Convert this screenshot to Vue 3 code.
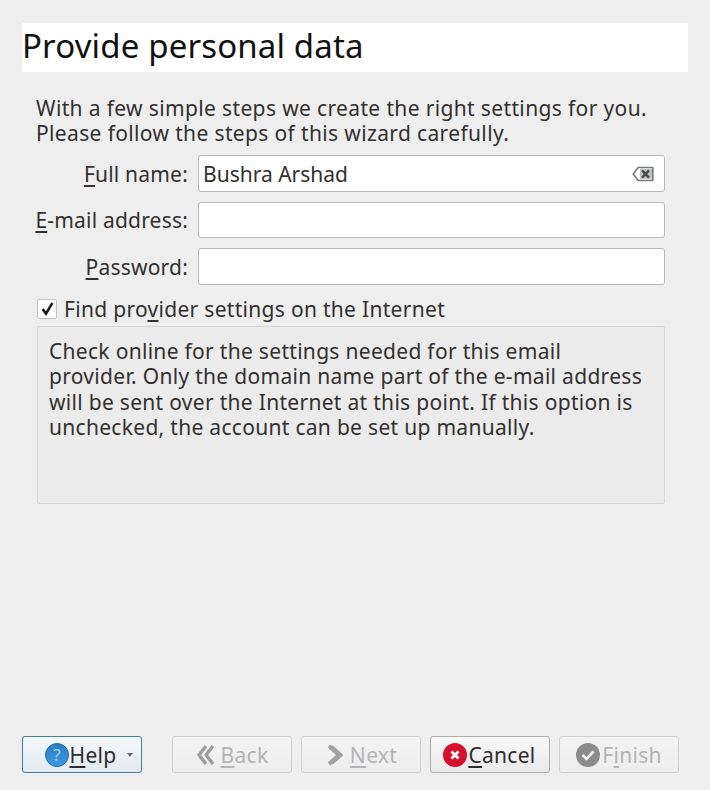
<template>
  <div class="wizard">
    <div class="title-bar">Provide personal data</div>

    <div class="content">
      <p class="intro">
        With a few simple steps we create the right settings for you.<br>
        Please follow the steps of this wizard carefully.
      </p>

      <div class="form">
        <label class="form-label"><u>F</u>ull name:</label>
        <div class="input">
          <span>Bushra Arshad</span>
          <svg class="clear-icon" width="22" height="16" viewBox="0 0 22 16">
            <path d="M1.2 8 L6.2 1.5 H20.8 V14.5 H6.2 Z" fill="none" stroke="#77797a" stroke-width="1.6" stroke-linejoin="round" />
            <rect x="8" y="3" width="12" height="10" fill="#c3c5c5" />
            <path d="M10 4.4 L17 11.6 M17 4.4 L10 11.6" stroke="#47494a" stroke-width="2.4" />
          </svg>
        </div>

        <label class="form-label"><u>E</u>-mail address:</label>
        <div class="input"></div>

        <label class="form-label"><u>P</u>assword:</label>
        <div class="input"></div>
      </div>

      <div class="check-row">
        <span class="checkbox">
          <svg width="15" height="15" viewBox="0 0 15 15">
            <path d="M2.6 8 L6 12.6 L12.4 1.8" fill="none" stroke="#1c1c1c" stroke-width="2.6" />
          </svg>
        </span>
        <span>Find pro<u>v</u>ider settings on the Internet</span>
      </div>

      <div class="info-box">
        Check online for the settings needed for this email<br>
        provider. Only the domain name part of the e-mail address<br>
        will be sent over the Internet at this point. If this option is<br>
        unchecked, the account can be set up manually.
      </div>
    </div>

    <div class="buttons">
      <button class="btn btn-help">
        <svg width="24" height="24" viewBox="0 0 24 24">
          <defs>
            <linearGradient id="helpFill" x1="0" y1="0" x2="0" y2="1">
              <stop offset="0" stop-color="#2a7cc6" />
              <stop offset="1" stop-color="#3f9ae0" />
            </linearGradient>
          </defs>
          <circle cx="12" cy="12" r="11.5" fill="url(#helpFill)" stroke="#1f6eb2" stroke-width="1" />
          <text x="12" y="18" text-anchor="middle" class="help-mark">?</text>
        </svg>
        <span><u>H</u>elp</span>
        <span class="caret"></span>
      </button>

      <div class="nav-buttons">
        <button class="btn disabled">
          <svg width="20" height="22" viewBox="0 0 20 22">
            <path d="M10 2 L3 11 L10 20 M17 2 L10 11 L17 20" fill="none" stroke="#9d9d9d" stroke-width="3.4" stroke-linejoin="round" />
          </svg>
          <span><u>B</u>ack</span>
        </button>
        <button class="btn disabled">
          <svg width="20" height="22" viewBox="0 0 20 22">
            <path d="M4 2 L14 11 L4 20" fill="none" stroke="#a2a2a2" stroke-width="4" stroke-linejoin="round" />
            <path d="M7 2 L17 11 L7 20" fill="none" stroke="#a2a2a2" stroke-width="2" stroke-linejoin="round" />
          </svg>
          <span><u>N</u>ext</span>
        </button>
        <button class="btn btn-cancel">
          <svg width="24" height="24" viewBox="0 0 24 24">
            <circle cx="12" cy="12" r="12" fill="#d5112f" />
            <path d="M8.5 8.5 L15.5 15.5 M15.5 8.5 L8.5 15.5" stroke="#fff" stroke-width="2.8" />
          </svg>
          <span><u>C</u>ancel</span>
        </button>
        <button class="btn disabled btn-finish">
          <svg width="24" height="24" viewBox="0 0 24 24">
            <circle cx="12" cy="12" r="12" fill="#8c8c8c" />
            <path d="M6.5 12 L10.5 16 L17.5 8.5" fill="none" stroke="#f2f2f2" stroke-width="2.6" />
          </svg>
          <span>F<u>i</u>nish</span>
        </button>
      </div>
    </div>
  </div>
</template>

<script setup>
</script>

<style>
html,
body {
  background: #eeeeee;
}
</style>

<style scoped>
.wizard {
  box-sizing: border-box;
  width: 710px;
  height: 790px;
  padding: 23px 22px 17px;
  display: flex;
  flex-direction: column;
  background: #eeeeee;
  color: #33302e;
  font-family: "Noto Sans", "Open Sans", sans-serif;
  font-size: 21px;
}

u {
  text-underline-offset: 3px;
  text-decoration-thickness: 2px;
}

.title-bar {
  height: 49px;
  width: 666px;
  background: #fff;
  color: #111;
  font-size: 33px;
  letter-spacing: 0.15px;
  line-height: 45px;
}

.content {
  flex: 1;
  padding: 24px 23px 0 14px;
}

.intro {
  margin: 0;
  line-height: 25px;
  letter-spacing: 0.36px;
}

.form {
  margin-top: 9px;
  display: grid;
  grid-template-columns: 152px 467px;
  column-gap: 10px;
  row-gap: 10px;
  align-items: center;
}

.form-label {
  justify-self: end;
  white-space: nowrap;
  padding-top: 1px;
  letter-spacing: 0.2px;
}

.input {
  box-sizing: border-box;
  height: 36.5px;
  padding: 1px 4px 0;
  display: flex;
  align-items: center;
  justify-content: space-between;
  background: #fff;
  border: 1px solid #b8b8b8;
  border-radius: 3px;
}

.clear-icon {
  margin-right: 6px;
}

.check-row {
  margin-top: 13px;
  height: 22px;
  padding-left: 1px;
  display: flex;
  align-items: center;
  gap: 7px;
  letter-spacing: 0.3px;
}

.checkbox {
  box-sizing: border-box;
  width: 20px;
  height: 20px;
  display: flex;
  align-items: center;
  justify-content: center;
  background: #fff;
  border: 1px solid #c4c4c4;
  border-radius: 2px;
}

.info-box {
  box-sizing: border-box;
  width: 628px;
  height: 178px;
  margin: 6.5px 0 0 1px;
  padding: 11.5px 11px;
  background: #ebebeb;
  border: 1px solid #d4d4d4;
  border-radius: 2px;
  line-height: 25.5px;
  letter-spacing: 0.3px;
}

.buttons {
  display: flex;
  justify-content: space-between;
  width: 657px;
}

.nav-buttons {
  display: flex;
  gap: 9px;
}

.btn {
  box-sizing: border-box;
  width: 120px;
  height: 37px;
  padding: 0;
  display: flex;
  align-items: center;
  justify-content: center;
  gap: 1px;
  background: linear-gradient(#f8f8f8, #e9e9e9);
  border: 1px solid #adadad;
  border-radius: 3px;
  color: #2e2c2a;
  font-family: inherit;
  font-size: 21px;
  letter-spacing: 0.3px;
}

.btn.disabled {
  background: linear-gradient(#f4f4f4, #ededed);
  border-color: #cfcfcf;
  color: #b4b4b4;
}

.btn.disabled svg {
  margin-right: 4px;
}

.btn-finish.disabled svg {
  margin-right: 1px;
}

.btn-cancel {
  padding-right: 1px;
}

.btn-help {
  background: linear-gradient(#f3f8fb, #e2eaf0);
  border-color: #3f7ea6;
  padding-left: 14px;
}

.help-mark {
  fill: #a9d2f2;
  font-family: "Noto Sans", sans-serif;
  font-size: 17px;
}

.caret {
  width: 0;
  height: 0;
  margin-left: 10px;
  border-left: 3.5px solid transparent;
  border-right: 3.5px solid transparent;
  border-top: 4px solid #666;
}
</style>
